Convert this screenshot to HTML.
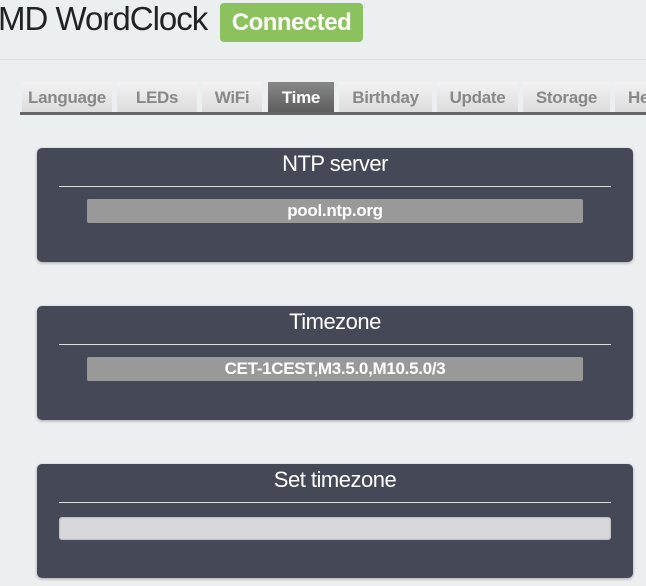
<!DOCTYPE html>
<html><head><style>
body{margin:0;width:646px;height:586px;background:#eceff0;font-family:"Liberation Sans",sans-serif;overflow:hidden;position:relative}
.t{position:absolute;left:-2px;top:0;font-size:33px;color:#222;letter-spacing:-1px;line-height:38px}
.b{position:absolute;left:220px;top:3px;width:143px;height:39px;background:#8cc25e;border-radius:4px;color:#fff;font-weight:bold;font-size:24px;line-height:39px;text-align:center;letter-spacing:-0.5px}
.sep{position:absolute;left:0;right:0;top:59px;height:1px;background:#dde0e1}
.tab{position:absolute;top:82px;height:30px;background:linear-gradient(#f2f2f2,#dcdcdc);color:#888;font-weight:bold;font-size:17px;line-height:31px;text-align:center;letter-spacing:-0.3px}
.tab.a{background:linear-gradient(#888,#5e5e5e);color:#fff}
.ul{position:absolute;left:20px;right:0;top:112px;height:3px;background:#666}
.p{position:absolute;left:37px;width:596px;height:114px;background:#454857;border-radius:5px;box-shadow:0 1px 3px rgba(0,0,0,.3)}
.p h{position:absolute;left:0;right:0;top:3px;text-align:center;color:#fff;font-size:22px;line-height:26px;letter-spacing:-0.5px}
.p .l{position:absolute;left:22px;width:552px;top:38px;height:1px;background:#ddd}
.p .i{position:absolute;left:50px;width:496px;top:51px;height:24px;background:#999;border-radius:2px;color:#fff;font-weight:bold;font-size:17px;line-height:24px;text-align:center;letter-spacing:-0.3px}
.p .e{position:absolute;left:22px;width:552px;top:53px;height:23px;background:#d8d8da;border-radius:3px;box-shadow:inset 0 0 2px #999}
</style></head><body>
<div class="t">MD WordClock</div>
<div class="b">Connected</div>
<div class="sep"></div>
<div class="tab" style="left:22px;width:90px">Language</div>
<div class="tab" style="left:117px;width:80px">LEDs</div>
<div class="tab" style="left:202px;width:60px">WiFi</div>
<div class="tab a" style="left:268px;width:66px">Time</div>
<div class="tab" style="left:339px;width:93px">Birthday</div>
<div class="tab" style="left:437px;width:81px">Update</div>
<div class="tab" style="left:523px;width:87px">Storage</div>
<div class="tab" style="left:615px;width:60px;text-align:left;padding-left:13px">Help</div>
<div class="ul"></div>
<div class="p" style="top:148px"><h>NTP server</h><div class="l"></div><div class="i">pool.ntp.org</div></div>
<div class="p" style="top:306px"><h>Timezone</h><div class="l"></div><div class="i">CET-1CEST,M3.5.0,M10.5.0/3</div></div>
<div class="p" style="top:464px"><h>Set timezone</h><div class="l"></div><div class="e"></div></div>
</body></html>
